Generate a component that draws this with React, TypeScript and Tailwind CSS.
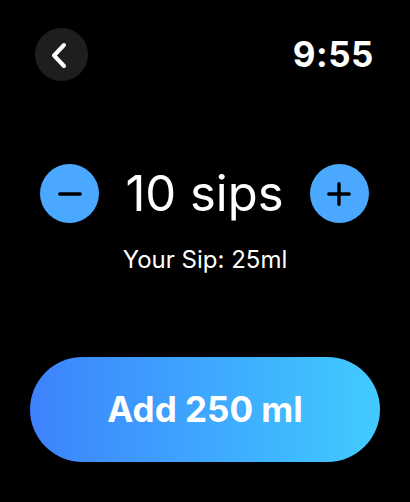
const font = { fontFamily: 'Inter, "Noto Sans", sans-serif' }

function RoundButton({ sign }: { sign: 'minus' | 'plus' }) {
  return (
    <button className="flex h-[59px] w-[59px] shrink-0 items-center justify-center rounded-full bg-[#4aa9ff]">
      <svg width="24" height="24" viewBox="0 0 24 24" fill="none" stroke="#000" strokeWidth="3.4" strokeLinecap="round">
        <path d="M1.8 12h20.4" />
        {sign === 'plus' && <path d="M12 1.8v20.4" />}
      </svg>
    </button>
  )
}

export default function App() {
  const sips = 10
  const sipSize = 25

  return (
    <div className="flex h-[502px] w-[410px] flex-col bg-black text-white" style={font}>
      <div className="flex items-center justify-between pl-[35px] pr-[36px] pt-[28px]">
        <button className="h-[53px] w-[53px] rounded-full bg-[#1e1e1e]">
          <svg width="53" height="53" viewBox="0 0 53 53" fill="none" stroke="#fff" strokeWidth="4" strokeLinecap="round" strokeLinejoin="round">
            <path d="M29 17 L19 27.5 L29 38" />
          </svg>
        </button>
        <span className="text-[35px] font-bold tracking-[0.5px]">9:55</span>
      </div>

      <div className="mt-[83px] flex items-center justify-between pl-[40px] pr-[41px]">
        <RoundButton sign="minus" />
        <span className="text-[49px] leading-none">{sips} sips</span>
        <RoundButton sign="plus" />
      </div>

      <div className="mt-[25px] text-center text-[24px] leading-none">Your Sip: {sipSize}ml</div>

      <div className="mt-auto px-[30px] pb-[40px]">
        <button className="flex h-[105px] w-full items-center justify-center rounded-full bg-gradient-to-r from-[#3e82fc] to-[#42cbff] text-[35px] font-bold">
          Add {sips * sipSize} ml
        </button>
      </div>
    </div>
  )
}
